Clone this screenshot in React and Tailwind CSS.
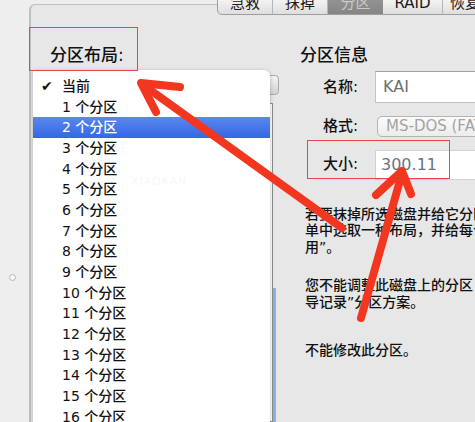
import React from "react";

const items = [
  "当前",
  "1 个分区",
  "2 个分区",
  "3 个分区",
  "4 个分区",
  "5 个分区",
  "6 个分区",
  "7 个分区",
  "8 个分区",
  "9 个分区",
  "10 个分区",
  "11 个分区",
  "12 个分区",
  "13 个分区",
  "14 个分区",
  "15 个分区",
  "16 个分区",
];

const tabs = [
  { label: "急救", w: "w-[55px]" },
  { label: "抹掉", w: "w-[55px]" },
  { label: "分区", w: "w-[55px]", active: true },
  { label: "RAID", w: "w-[60px]" },
  { label: "恢复", w: "w-[44px]" },
];

function Arrows() {
  return (
    <svg className="absolute inset-0 pointer-events-none" width="475" height="422" viewBox="0 0 475 422">
      <g stroke="#f2361f" strokeLinecap="round" strokeLinejoin="round" fill="none">
        {/* arrow to layout label */}
        <path d="M146 87 L342 228" strokeWidth="8" />
        <path d="M180 87 L141 83 L156 112" strokeWidth="8" />
        {/* arrow to size field */}
        <path d="M401 177 L361 318" strokeWidth="8" />
        <path d="M376 195 L402 171 L411 194" strokeWidth="8" />
      </g>
    </svg>
  );
}

export default function App() {
  return (
    <div className="relative w-[475px] h-[422px] overflow-hidden bg-[#eeeeee] flex font-['DejaVu_Sans','Noto_Sans_CJK_SC',sans-serif] text-[#111111]">
      {/* left margin */}
      <div className="w-[29px] shrink-0">
        <div className="mt-[274px] ml-[9px] w-[7px] h-[7px] rounded-full border border-[#b8b8b8] bg-[#f7f7f7]"></div>
      </div>

      {/* main panel */}
      <div className="flex-1 mt-[4px] border-l-2 border-t border-[#c0c0c0] rounded-tl-[6px] bg-[#e7e7e7] flex">
        {/* left column */}
        <div className="w-[248px] shrink-0 flex flex-col">
          <div className="pl-[19px] pt-[38px] text-[17px] leading-[24px] font-medium">分区布局:</div>
          <div className="mt-[8px] ml-[9px] w-[239px] h-[20px] shrink-0 rounded-[4px] border border-[#a9a9a9] bg-gradient-to-b from-[#f4f4f4] to-[#d2d2d2]"></div>
          <div className="mt-[8px] ml-[7px] flex flex-1">
            <div className="w-[235px] bg-white border border-[#8d8d8d]"></div>
            <div className="w-[3px] mt-[185px] bg-[#8cb0e6]"></div>
          </div>
        </div>

        {/* right column */}
        <div className="flex-1 overflow-hidden pl-[21px] pt-[38px]">
          <div className="text-[17px] leading-[24px] whitespace-nowrap font-medium">分区信息</div>

          <div className="mt-[4px] flex items-center gap-[17px]">
            <div className="w-[58px] text-right text-[15px] whitespace-nowrap font-medium">名称:</div>
            <div className="w-[140px] h-[32px] shrink-0 bg-white border border-[#c4c4c4] border-t-[#a0a0a0] flex items-center pl-[7px] text-[16px] text-[#6f6f6f]">
              KAI
            </div>
          </div>

          <div className="mt-[12px] flex items-center gap-[17px]">
            <div className="w-[58px] text-right text-[15px] whitespace-nowrap font-medium">格式:</div>
            <div className="w-[140px] h-[21px] shrink-0 ml-[2px] rounded-[5px] border border-[#b4b4b4] bg-gradient-to-b from-[#fbfbfb] to-[#ececec] flex items-center pl-[8px] text-[15px] text-[#a3a3a3] whitespace-nowrap overflow-hidden">
              MS-DOS (FAT)
            </div>
          </div>

          <div className="mt-[12px] flex items-center gap-[17px]">
            <div className="w-[58px] text-right text-[15px] whitespace-nowrap font-medium">大小:</div>
            <div className="w-[140px] h-[30px] shrink-0 bg-white border border-[#d2d2d2] flex items-center pl-[5px] text-[16px] text-[#6b7386]">
              300.11
            </div>
          </div>

          <div className="mt-[26px] pl-[5px] text-[14px] leading-[16.5px] whitespace-nowrap font-medium">
            <div>若要抹掉所选磁盘并给它分区，请从“分区布局”弹出式菜</div>
            <div>单中选取一种布局，并给每个分区设定选项，然后点按“应</div>
            <div>用”。</div>
          </div>

          <div className="mt-[22px] pl-[5px] text-[14px] leading-[16.5px] whitespace-nowrap font-medium">
            <div>您不能调整此磁盘上的分区，因为它使用的是“主引</div>
            <div>导记录”分区方案。</div>
          </div>

          <div className="mt-[32px] pl-[5px] text-[14px] leading-[16.5px] whitespace-nowrap font-medium">
            不能修改此分区。
          </div>
        </div>
      </div>

      {/* segmented tabs */}
      <div className="absolute top-[-9px] left-[217px] h-[24px] flex rounded-[5px] border border-[#9e9e9e] bg-gradient-to-b from-[#ffffff] to-[#dedede] overflow-hidden text-[15px] leading-[22px]">
        {tabs.map((t, i) => (
          <div
            key={t.label}
            className={
              t.active
                ? `${t.w} text-center bg-gradient-to-b from-[#9a9a9a] to-[#858585] text-[#c9c9c9]`
                : `${t.w} text-center text-[#1a1a1a] ${i < tabs.length - 1 ? "border-r border-[#b5b5b5]" : ""}`
            }
          >
            {t.label}
          </div>
        ))}
      </div>

      {/* popup menu */}
      <div className="absolute left-[33px] top-[70px] w-[237px] h-[370px] bg-white rounded-tr-[6px] shadow-[0_1px_4px_rgba(0,0,0,0.25)] pt-[6px]">
        {items.map((label, i) => (
          <div
            key={label}
            className={`h-[20.7px] flex items-center pl-[29px] relative text-[14px] font-medium whitespace-nowrap ${
              i === 2 ? "bg-gradient-to-b from-[#5a87ee] to-[#3467e4] text-white" : "text-[#111111]"
            }`}
          >
            {i === 0 && <span className="absolute left-[8px] text-[14px] font-bold">✔</span>}
            {label}
          </div>
        ))}
        <div className="absolute left-[98px] top-[104px] text-[11px] tracking-[1px] text-[#f7f7f7]">XIAOKAN</div>
      </div>

      {/* highlight boxes */}
      <div className="absolute left-[29px] top-[27px] w-[109px] h-[44px] border-[1.5px] border-[#e2474b]"></div>
      <div className="absolute left-[307px] top-[140px] w-[143px] h-[39px] border-[1.5px] border-[#e2474b]"></div>

      <Arrows />
    </div>
  );
}
